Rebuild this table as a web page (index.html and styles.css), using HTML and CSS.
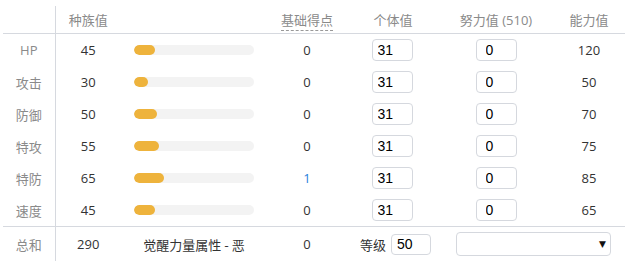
FILE: index.html
```html
<!DOCTYPE html>
<html lang="zh">
<head>
<meta charset="utf-8">
<link rel="stylesheet" href="styles.css">
</head>
<body>
<div class="wrap">
<table class="stats">
  <colgroup>
    <col class="c1"><col class="c2"><col class="c3"><col class="c4"><col class="c5"><col class="c6"><col class="c7">
  </colgroup>
  <thead>
    <tr>
      <th class="lab"></th>
      <th>种族值</th>
      <th></th>
      <th><span class="dash">基础得点</span></th>
      <th>个体值</th>
      <th>努力值 (510)</th>
      <th>能力值</th>
    </tr>
  </thead>
  <tbody>
    <tr>
      <td class="lab">HP</td><td class="num">45</td>
      <td class="barcell"><div class="bar"><div class="fill" style="width:21px"></div></div></td>
      <td class="num">0</td>
      <td><input class="iv" value="31"></td>
      <td><input class="ev" value="0"></td>
      <td class="num">120</td>
    </tr>
    <tr>
      <td class="lab">攻击</td><td class="num">30</td>
      <td class="barcell"><div class="bar"><div class="fill" style="width:14px"></div></div></td>
      <td class="num">0</td>
      <td><input class="iv" value="31"></td>
      <td><input class="ev" value="0"></td>
      <td class="num">50</td>
    </tr>
    <tr>
      <td class="lab">防御</td><td class="num">50</td>
      <td class="barcell"><div class="bar"><div class="fill" style="width:23px"></div></div></td>
      <td class="num">0</td>
      <td><input class="iv" value="31"></td>
      <td><input class="ev" value="0"></td>
      <td class="num">70</td>
    </tr>
    <tr>
      <td class="lab">特攻</td><td class="num">55</td>
      <td class="barcell"><div class="bar"><div class="fill" style="width:25px"></div></div></td>
      <td class="num">0</td>
      <td><input class="iv" value="31"></td>
      <td><input class="ev" value="0"></td>
      <td class="num">75</td>
    </tr>
    <tr>
      <td class="lab">特防</td><td class="num">65</td>
      <td class="barcell"><div class="bar"><div class="fill" style="width:30px"></div></div></td>
      <td class="num blue">1</td>
      <td><input class="iv" value="31"></td>
      <td><input class="ev" value="0"></td>
      <td class="num">85</td>
    </tr>
    <tr>
      <td class="lab">速度</td><td class="num">45</td>
      <td class="barcell"><div class="bar"><div class="fill" style="width:21px"></div></div></td>
      <td class="num">0</td>
      <td><input class="iv" value="31"></td>
      <td><input class="ev" value="0"></td>
      <td class="num">65</td>
    </tr>
  </tbody>
  <tfoot>
    <tr>
      <td class="lab">总和</td>
      <td class="num">290</td>
      <td class="hp">觉醒力量属性 - 恶</td>
      <td class="num">0</td>
      <td class="lvcell"><span class="lvl">等级</span><input class="lv" value="50"></td>
      <td colspan="2" class="selcell"><div class="sel"><span class="arrow">▼</span></div></td>
    </tr>
  </tfoot>
</table>
</div>
</body>
</html>
```
FILE: styles.css
```css
html, body {
  margin: 0;
  padding: 0;
  background: #fff;
}
body {
  font-family: "Open Sans", "Noto Sans CJK SC", sans-serif;
  font-size: 13px;
  color: #333;
}
.wrap {
  padding: 6px 3px 0 3px;
}
.stats {
  border-collapse: collapse;
  table-layout: fixed;
  width: 622px;
}
.c1 { width: 52px; }
.c2 { width: 66px; }
.c3 { width: 146px; }
.c4 { width: 80px; }
.c5 { width: 92px; }
.c6 { width: 114px; }
.c7 { width: 72px; }

.stats th {
  font-weight: normal;
  color: #8a8a8a;
  height: 27px;
  padding: 0;
  text-align: center;
  border-bottom: 1px solid #d6d9df;
  font-family: "Noto Sans CJK SC", "Open Sans", sans-serif;
  font-size: 13px;
}
.stats th:nth-child(6) {
  font-family: "Open Sans", "Noto Sans CJK SC", sans-serif;
}
.stats td {
  padding: 0;
  text-align: center;
  height: 32px;
}
.stats .lab {
  border-right: 1px solid #d6d9df;
  color: #8a8a8a;
  font-family: "Open Sans", "Noto Sans CJK SC", sans-serif;
}
.stats tfoot td {
  border-top: 1px solid #d6d9df;
  height: 34px;
}
.dash {
  border-bottom: 1px dashed #999;
  padding-bottom: 1px;
}
.num { color: #333; }
.stats .blue { color: #1f7fdc; }
.barcell { text-align: left; }
.bar {
  margin-left: 13px;
  width: 120px;
  height: 10px;
  border-radius: 5px;
  background: #f3f3f3;
  overflow: hidden;
}
.fill {
  height: 10px;
  border-radius: 5px;
  background: #eeb33c;
}
input {
  box-sizing: border-box;
  height: 22px;
  border: 1px solid #d5d8de;
  border-radius: 4px;
  font-family: "Liberation Sans", Arial, sans-serif;
  font-size: 14px;
  color: #000;
  outline: none;
  vertical-align: middle;
  background: #fff;
}
.iv {
  width: 41px;
  padding: 0 0 0 5px;
  margin-left: -2px;
}
.ev {
  width: 41px;
  padding: 0 0 0 9px;
}
.lvcell {
  text-align: left;
}
.lvl {
  margin-left: 5px;
  margin-right: 5px;
  font-family: "Noto Sans CJK SC", sans-serif;
  color: #333;
  vertical-align: middle;
}
.lv {
  width: 40px;
  height: 21px;
  padding: 0 0 0 5px;
}
.selcell { text-align: left; }
.sel {
  box-sizing: border-box;
  margin-left: 17px;
  width: 155px;
  height: 24px;
  border: 1px solid #d5d8de;
  border-radius: 4px;
  display: flex;
  align-items: center;
  justify-content: flex-end;
  padding-right: 4px;
}
.arrow {
  font-size: 9px;
  color: #111;
  font-family: "DejaVu Sans", sans-serif;
}
.hp {
  font-family: "Noto Sans CJK SC", sans-serif;
  color: #333;
}
```
